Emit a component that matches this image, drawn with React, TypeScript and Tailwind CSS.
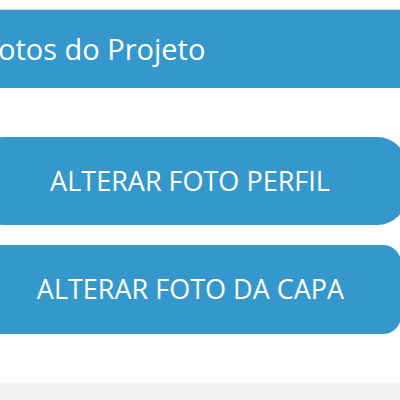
import React from "react";

const App: React.FC = () => {
  return (
    <div className="w-[400px] h-[400px] overflow-hidden bg-white font-['Open_Sans',sans-serif] text-white">
      <div className="h-[10px] border-b border-[#dcdcdc]" />
      <div className="h-[78px] bg-[#3598cc] flex items-center">
        <h2 className="ml-[-17px] text-[29px] font-medium whitespace-nowrap">Fotos do Projeto</h2>
      </div>
      <div className="mt-[49px] flex flex-col gap-5">
        <button className="h-[88px] ml-[-27px] w-[434px] rounded-[30px] bg-[#3598cc] text-[27px] text-white flex items-center justify-center whitespace-nowrap">
          ALTERAR FOTO PERFIL
        </button>
        <button className="h-[89px] ml-[-20px] w-[421px] rounded-[18px] bg-[#3598cc] text-[27px] text-white flex items-center justify-center whitespace-nowrap">
          ALTERAR FOTO DA CAPA
        </button>
      </div>
      <div className="mt-[49px] h-[20px] bg-[#f4f4f4]" />
    </div>
  );
};

export default App;
